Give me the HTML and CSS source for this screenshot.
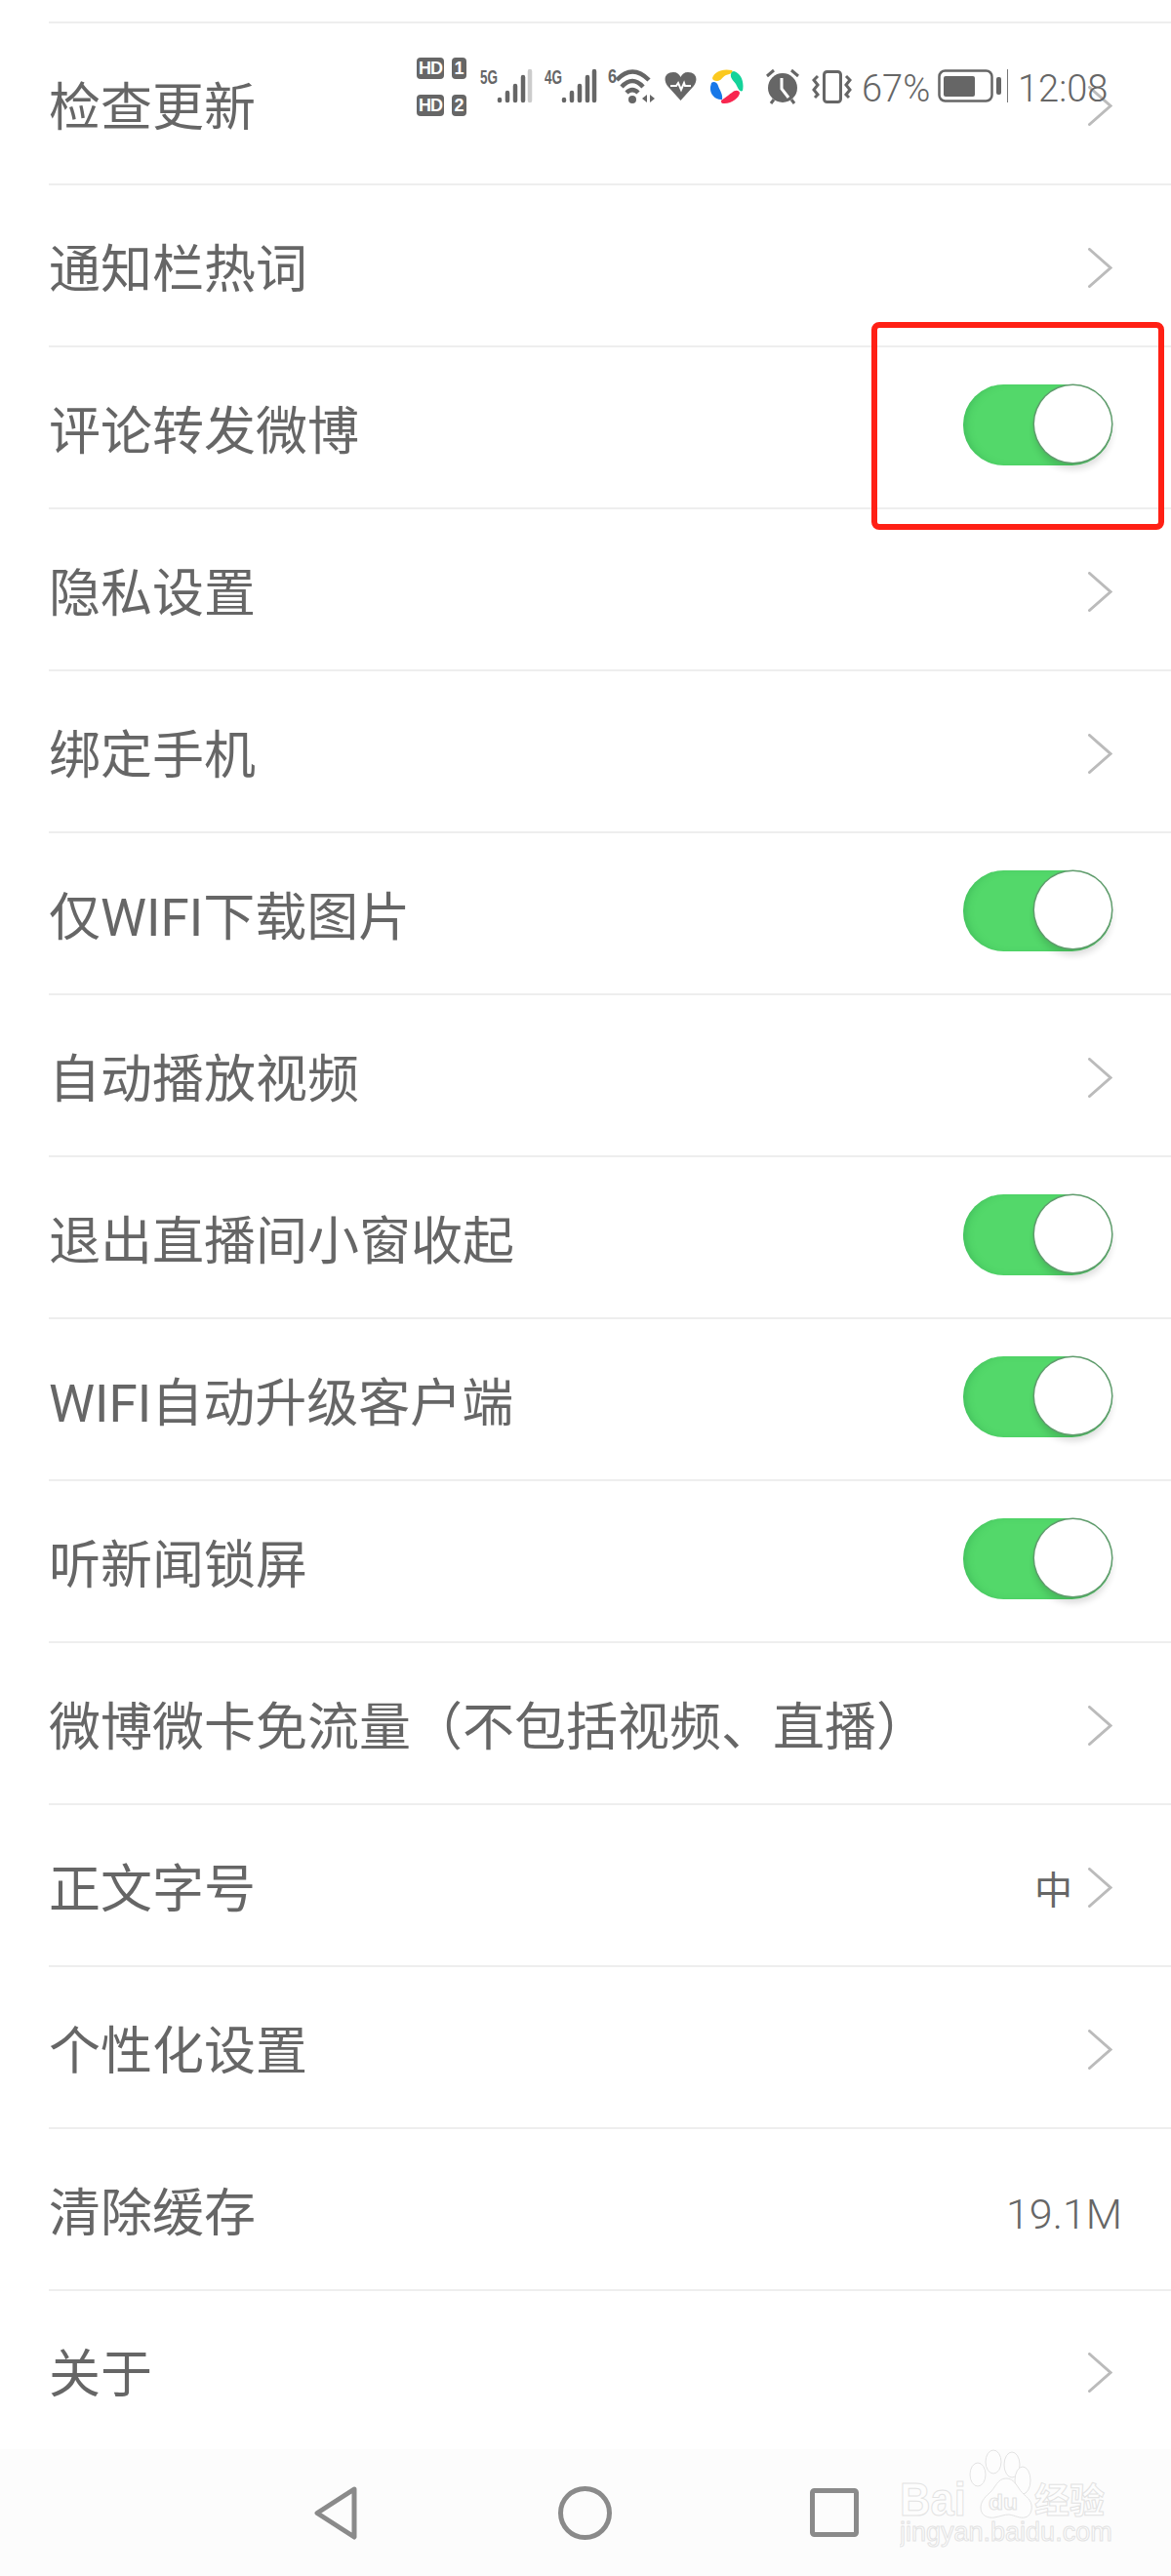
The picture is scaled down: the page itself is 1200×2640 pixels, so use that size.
FILE: index.html
```html
<!DOCTYPE html>
<html lang="zh-CN">
<head>
    <meta charset="UTF-8">
    <meta name="viewport" content="width=device-width, initial-scale=1.0">
    <title>设置</title>
    <link rel="stylesheet" href="styles.css">
</head>
<body>
    <div id="screen">
        <div id="settings-list">
            <div class="row"><span class="label">检查更新</span><svg class="chevron" viewBox="0 0 25 41"><path d="M1.5 1.5L23 20.5L1.5 39.5"/></svg></div>
            <div class="row"><span class="label">通知栏热词</span><svg class="chevron" viewBox="0 0 25 41"><path d="M1.5 1.5L23 20.5L1.5 39.5"/></svg></div>
            <div class="row"><span class="label">评论转发微博</span><div class="toggle"><div class="knob"></div></div></div>
            <div class="row"><span class="label">隐私设置</span><svg class="chevron" viewBox="0 0 25 41"><path d="M1.5 1.5L23 20.5L1.5 39.5"/></svg></div>
            <div class="row"><span class="label">绑定手机</span><svg class="chevron" viewBox="0 0 25 41"><path d="M1.5 1.5L23 20.5L1.5 39.5"/></svg></div>
            <div class="row"><span class="label">仅WIFI下载图片</span><div class="toggle"><div class="knob"></div></div></div>
            <div class="row"><span class="label">自动播放视频</span><svg class="chevron" viewBox="0 0 25 41"><path d="M1.5 1.5L23 20.5L1.5 39.5"/></svg></div>
            <div class="row"><span class="label">退出直播间小窗收起</span><div class="toggle"><div class="knob"></div></div></div>
            <div class="row"><span class="label">WIFI自动升级客户端</span><div class="toggle"><div class="knob"></div></div></div>
            <div class="row"><span class="label">听新闻锁屏</span><div class="toggle"><div class="knob"></div></div></div>
            <div class="row"><span class="label">微博微卡免流量（不包括视频、直播）</span><svg class="chevron" viewBox="0 0 25 41"><path d="M1.5 1.5L23 20.5L1.5 39.5"/></svg></div>
            <div class="row"><span class="label">正文字号</span><span class="value value-size">中</span><svg class="chevron" viewBox="0 0 25 41"><path d="M1.5 1.5L23 20.5L1.5 39.5"/></svg></div>
            <div class="row"><span class="label">个性化设置</span><svg class="chevron" viewBox="0 0 25 41"><path d="M1.5 1.5L23 20.5L1.5 39.5"/></svg></div>
            <div class="row"><span class="label">清除缓存</span><span class="value value-cache">19.1M</span></div>
            <div class="row row-last"><span class="label">关于</span><svg class="chevron" viewBox="0 0 25 41"><path d="M1.5 1.5L23 20.5L1.5 39.5"/></svg></div>
        </div>

        <div id="nav-bar">
            <svg class="nav-back" viewBox="0 0 46 55"><path d="M41 3L3 27.5L41 52Z"/></svg>
            <svg class="nav-home" viewBox="0 0 55 55"><circle cx="27.5" cy="27.5" r="25"/></svg>
            <svg class="nav-recent" viewBox="0 0 50 50"><rect x="2.5" y="2.5" width="45" height="45" rx="2"/></svg>

            <!-- marca d'agua -->
            <svg id="watermark" viewBox="0 0 220 110">
                <ellipse cx="80" cy="26" rx="8" ry="12"/>
                <ellipse cx="96" cy="13" rx="8" ry="12"/>
                <ellipse cx="115" cy="16" rx="8" ry="13"/>
                <ellipse cx="126" cy="32" rx="8" ry="14"/>
                <path d="M109 30C100 30 98 40 92 45C86 50 83 55 83 60C83 68 90 71 97 70C103 69 107 67 112 67C118 68 123 71 128 70C134 69 136 62 135 57C134 50 126 47 122 40C118 34 115 30 109 30Z"/>
                <text class="wm-latin" x="0" y="68" font-size="48" textLength="68" lengthAdjust="spacingAndGlyphs">Bai</text>
                <text class="wm-latin" x="91" y="62" font-size="22" textLength="30" lengthAdjust="spacingAndGlyphs">du</text>
                <text class="wm-cjk" x="138" y="66" font-size="36">经验</text>
                <text class="wm-url" x="0" y="94" font-size="27">jingyan.baidu.com</text>
            </svg>
        </div>

        <!-- barra de status por cima da lista -->
        <div id="status-bar">
            <div class="sim-col">
                <div class="sim-line"><span class="sim-hd">HD</span><span class="sim-num">1</span></div>
                <div class="sim-line"><span class="sim-hd">HD</span><span class="sim-num">2</span></div>
            </div>
            <svg class="st-signal" viewBox="0 0 54 59">
                <text class="st-small" x="0" y="27" textLength="18" lengthAdjust="spacingAndGlyphs">5G</text>
                <path class="st-line" d="M20 43V44M28 36V44M36 29V44M44 20V44"/>
                <path class="st-line st-off" d="M51 14V44"/>
            </svg>
            <svg class="st-signal st-signal2" viewBox="0 0 54 59">
                <text class="st-small" x="0" y="27" textLength="18" lengthAdjust="spacingAndGlyphs">4G</text>
                <path class="st-line" d="M20 43V44M28 36V44M36 29V44M44 20V44M51 14V44"/>
            </svg>
            <svg class="st-wifi" viewBox="0 0 48 59">
                <text class="st-small" x="0" y="26" textLength="9" lengthAdjust="spacingAndGlyphs">6</text>
                <path class="st-arc" d="M9 23Q25 6 42 23M14 30Q25 18 36 30M19 36Q25 30 31 36"/>
                <circle class="st-fill" cx="25" cy="43" r="4"/>
                <path class="st-fill" d="M35 42L40 38V46ZM43 38L48 42L43 46Z"/>
            </svg>
            <svg class="st-heart" viewBox="0 0 33 59">
                <path class="st-fill" d="M16.5 44L3 29C-2 22 1 15 9 15C13 15 15 17 16.5 20C18 17 20 15 24 15C32 15 35 22 30 29Z"/>
                <path class="st-ecg" d="M6 29H12L14 26L17 33L20 26L21 29H27"/>
            </svg>
            <svg class="st-app" viewBox="0 0 35 59">
                <path fill="#fbc91f" d="M3 21C5 15 12 11 23 13C25 15 22 17 17 18C13 20 12 24 8 24C5 24 3 23 3 21Z"/>
                <path fill="#14d39a" d="M25 14C32 16 36 24 34 34C31 36 29 31 27 27C25 24 21 21 22 17C22 15 24 14 25 14Z"/>
                <path fill="#f8264f" d="M12 44C18 40 21 37 23 36C26 33 30 33 31 36C31 41 22 48 14 47C12 47 12 45 12 44Z"/>
                <path fill="#1878e8" d="M2 26C4 24 8 25 9 29C10 33 14 37 13 43C7 44 0 38 1 30Z"/>
            </svg>
            <svg class="st-alarm" viewBox="0 0 36 59">
                <circle class="st-fill" cx="18" cy="31" r="15"/>
                <path class="st-stroke" d="M2 19L9 13M34 19L27 13M6 47L9 43M30 47L27 43"/>
                <path class="st-hand" d="M17 21V32L24 41"/>
            </svg>
            <svg class="st-vibrate" viewBox="0 0 41 59">
                <rect class="st-stroke" x="12.5" y="14.5" width="17" height="31" rx="3"/>
                <path class="st-stroke" d="M6 19L2 23L6 28L2 33L6 38L3 41M35 19L39 23L35 28L39 33L35 38L38 41"/>
            </svg>
            <span class="st-text st-pct">67%</span>
            <svg class="st-battery" viewBox="0 0 65 59">
                <rect class="st-outline" x="1.5" y="13.5" width="54" height="31" rx="6"/>
                <rect class="st-fill" x="6" y="19" width="32" height="21" rx="2"/>
                <rect class="st-fill" x="60" y="20" width="5" height="18" rx="2"/>
            </svg>
            <div class="st-sep"></div>
            <span class="st-text st-time">12:08</span>
        </div>

        <div id="red-box"></div>
    </div>
</body>
</html>
```
FILE: styles.css
```css
body {
    margin: 0;
    background-color: #fff;
    font-family: Roboto, "Noto Sans CJK SC", sans-serif;
    color: #666;
}
#screen {
    position: relative;
    width: 1200px;
    height: 2640px;
    overflow: hidden;
    display: flex;
    flex-direction: column;
}
#settings-list {
    padding-top: 22px;
    margin-left: 50px;
}
.row {
    display: flex;
    align-items: center;
    height: 164px;
    padding-right: 60px;
    border-top: 2px solid #eee;
}
.row-last {
    height: 162px;
}
.label {
    flex: 1;
    font-size: 53px;
    line-height: 60px;
    margin-top: 10px;
}
.chevron {
    width: 25px;
    height: 41px;
    margin-top: 4px;
}
.chevron path {
    fill: none;
    stroke: #bbb;
    stroke-width: 3;
    stroke-linecap: round;
    stroke-linejoin: miter;
}
.value {
    font-size: 43px;
    margin-top: 4px;
}
.value-size {
    font-size: 39px;
    margin-right: 16px;
}
.value-cache {
    font-weight: 300;
    margin-top: 10px;
    margin-right: -10px;
}
.toggle {
    position: relative;
    width: 153px;
    height: 83px;
    margin: 0 0 6px 0;
    border-radius: 42px;
    background-color: #53d86a;
    box-shadow: inset 6px 0 8px -4px rgba(40, 150, 70, 0.45);
}
.knob {
    position: absolute;
    top: 1px;
    right: 1px;
    width: 79px;
    height: 79px;
    border-radius: 50%;
    background-color: #fff;
    box-shadow: 0 0 0 1.5px #5f9c6c, 0 7px 7px rgba(0, 0, 0, 0.14);
}

/* barra de navegacao */
#nav-bar {
    position: relative;
    flex: 1;
    display: flex;
    align-items: center;
    padding-left: 322px;
    background-color: #fcfcfc;
}
#nav-bar svg {
    fill: none;
    stroke: #8a8a8a;
    stroke-width: 5;
    stroke-linejoin: round;
}
.nav-back {
    width: 46px;
    height: 55px;
}
.nav-home {
    width: 55px;
    height: 55px;
    margin-left: 204px;
}
.nav-recent {
    width: 50px;
    height: 50px;
    margin-left: 203px;
}
#nav-bar #watermark {
    position: absolute;
    left: 922px;
    top: 0;
    width: 220px;
    height: 110px;
    fill: #fdfdfd;
    stroke: #e3e3e3;
    stroke-width: 1;
}
.wm-latin {
    font-family: "Liberation Sans", sans-serif;
    font-weight: bold;
}
.wm-cjk {
    font-family: "Noto Sans CJK SC", sans-serif;
    font-weight: bold;
}
.wm-url {
    font-family: "Liberation Sans", sans-serif;
}

/* barra de status */
#status-bar {
    position: absolute;
    left: 427px;
    top: 59px;
    display: flex;
    align-items: flex-start;
    height: 59px;
}
#status-bar svg {
    height: 59px;
    flex: none;
}
.sim-col {
    display: flex;
    flex-direction: column;
    gap: 16px;
    width: 51px;
}
.sim-line {
    display: flex;
    justify-content: space-between;
}
.sim-hd, .sim-num {
    height: 22px;
    line-height: 22px;
    border-radius: 4px;
    background-color: #666;
    color: #fff;
    font-family: "Liberation Sans", sans-serif;
    font-size: 18px;
    font-weight: bold;
    text-align: center;
}
.sim-hd {
    width: 28px;
    letter-spacing: -1px;
}
.sim-num {
    width: 15px;
}
.st-small {
    font-family: "Liberation Sans", sans-serif;
    font-size: 20px;
    font-weight: bold;
    fill: #666;
}
.st-line {
    fill: none;
    stroke: #666;
    stroke-width: 4.5;
    stroke-linecap: round;
}
.st-off {
    stroke: #ccc;
}
.st-arc {
    fill: none;
    stroke: #666;
    stroke-width: 4.5;
}
.st-fill {
    fill: #666;
}
.st-stroke {
    fill: none;
    stroke: #666;
    stroke-width: 3;
}
.st-outline {
    fill: none;
    stroke: #666;
    stroke-width: 2.5;
}
.st-ecg {
    fill: none;
    stroke: #fff;
    stroke-width: 2;
}
.st-hand {
    fill: none;
    stroke: #fff;
    stroke-width: 3;
}
.st-signal {
    width: 54px;
    margin-left: 14px;
}
.st-signal2 {
    margin-left: 12px;
}
.st-wifi {
    width: 48px;
    margin-left: 11px;
}
.st-heart {
    width: 33px;
    margin-left: 10px;
}
.st-app {
    width: 35px;
    margin-left: 13px;
}
.st-alarm {
    width: 36px;
    margin-left: 22px;
}
.st-vibrate {
    width: 41px;
    margin-left: 12px;
}
.st-text {
    font-family: Roboto, sans-serif;
    font-size: 38px;
    font-weight: 300;
    line-height: 59px;
    margin-top: 3px;
    white-space: nowrap;
}
.st-pct {
    width: 70px;
    margin-left: 10px;
}
.st-battery {
    width: 65px;
    margin-left: 8px;
}
.st-sep {
    width: 1px;
    height: 34px;
    margin: 12px 0 0 6px;
    background-color: #777;
}
.st-time {
    margin-left: 10px;
}

/* destaque vermelho */
#red-box {
    position: absolute;
    left: 893px;
    top: 330px;
    width: 300px;
    height: 213px;
    box-sizing: border-box;
    border: 6px solid #ff2015;
    border-radius: 8px;
}
```
